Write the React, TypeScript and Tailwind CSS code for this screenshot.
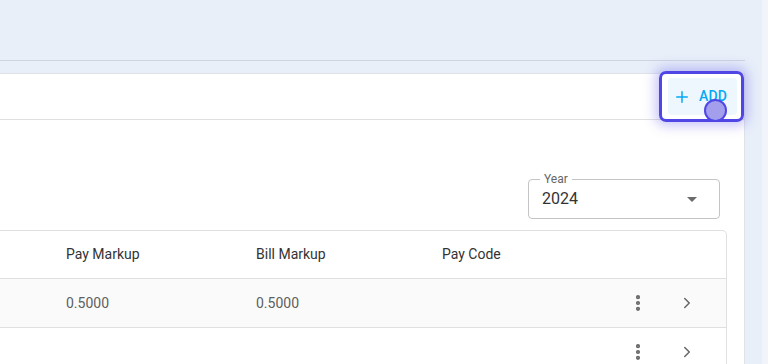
import { Plus, EllipsisVertical, ChevronRight } from 'lucide-react';

const rows = [
  { pay: '0.5000', bill: '0.5000', code: '' },
  { pay: '', bill: '', code: '' },
];

const Row = ({ pay, bill, code, shaded }: { pay: string; bill: string; code: string; shaded?: boolean }) => (
  <div className={`flex items-center h-[49px] border-b border-[#e0e0e0] text-[14px] text-[#5f5f5f] ${shaded ? 'bg-[#fafafa]' : 'bg-white'}`}>
    <div className="w-[256px] pl-[66px]">{pay}</div>
    <div className="w-[186px]">{bill}</div>
    <div className="w-[176px]">{code}</div>
    <div className="flex items-center">
      <span className="w-[40px] h-[32px] flex items-center justify-center text-[#666]">
        <EllipsisVertical className="w-[20px] h-[20px]" strokeWidth={3} />
      </span>
      <span className="ml-[9px] w-[40px] h-[32px] flex items-center justify-center text-[#666]">
        <ChevronRight className="w-[18px] h-[18px]" strokeWidth={2} />
      </span>
    </div>
  </div>
);

export default function App() {
  return (
    <div className="relative w-[768px] h-[364px] overflow-hidden bg-[#e8eff9] flex font-['Roboto',sans-serif]">
      <div className="w-[762px] shrink-0">
        {/* page title band */}
        <div className="h-[61px] w-[745px] border-b border-[#cdd5df]" />

        {/* card */}
        <div className="mt-[12px] w-[745px] h-[400px] bg-white border border-l-0 border-[#dfe3e8]">
          <div className="h-[46px] border-b border-[#e0e0e0] flex items-center justify-end pr-[7px]">
            <button className="h-[37px] w-[69px] rounded-[4px] bg-[#eff7fe] flex items-center gap-[8px] pl-[5px] text-[#03a9f4] text-[14px] font-medium tracking-[0.2px]">
              <Plus className="w-[18px] h-[18px]" strokeWidth={2} />
              <span>ADD</span>
            </button>
          </div>

          <div className="pt-[59px] pr-[17px]">
            <div className="flex justify-end pr-[7px]">
              <div className="relative w-[192px] h-[40px] rounded-[4px] border border-[#c4c4c4] flex items-center pl-[13px] pr-[22px] justify-between">
                <span className="absolute -top-[8px] left-[11px] bg-white px-[4px] text-[12px] leading-[14px] text-[#666]">Year</span>
                <span className="text-[16px] text-[#333]">2024</span>
                <span className="w-0 h-0 border-l-[5px] border-r-[5px] border-t-[5px] border-l-transparent border-r-transparent border-t-[#6b6b6b]" />
              </div>
            </div>

            <div className="mt-[11px] border border-l-0 border-[#e0e0e0] rounded-tr-[5px] overflow-hidden">
              <div className="flex items-center h-[48px] border-b border-[#e0e0e0] text-[14px] text-[#333]">
                <div className="w-[256px] pl-[66px]">Pay Markup</div>
                <div className="w-[186px]">Bill Markup</div>
                <div className="w-[176px]">Pay Code</div>
              </div>
              {rows.map((r, i) => (
                <Row key={i} {...r} shaded={i === 0} />
              ))}
            </div>
          </div>
        </div>
      </div>
      <div className="flex-1 bg-[#f1f5fb]" />

      {/* highlight overlay on the ADD button */}
      <div className="absolute left-[659px] top-[71px] w-[85px] h-[51px] rounded-[7px] border-[3px] border-[#4f46e5] shadow-[0_0_12px_4px_rgba(99,91,235,0.35)]" />
      <div className="absolute left-[704px] top-[99px] w-[23px] h-[23px] rounded-full bg-[#a39fec] border-[2px] border-[#4f46e5]" />
    </div>
  );
}
